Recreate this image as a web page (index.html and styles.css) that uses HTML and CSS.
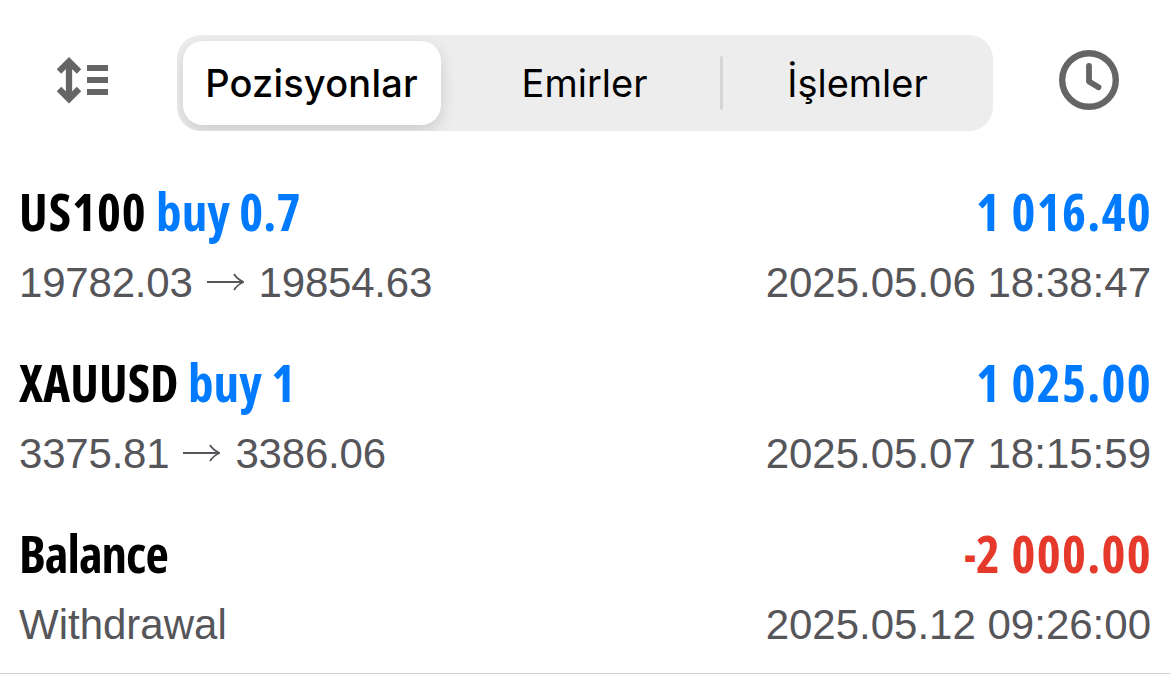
FILE: index.html
```html
<!DOCTYPE html>
<html lang="tr">
<head>
    <meta charset="UTF-8">
    <meta name="viewport" content="width=device-width, initial-scale=1.0">
    <title>Pozisyonlar</title>
    <link rel="stylesheet" href="styles.css">
</head>
<body>
    <header class="toolbar">
        <svg class="icon-sort" viewBox="0 0 54 48" width="54" height="48">
            <path d="M13 5V43M3 15.500L13 5.500L23 15.500M3 33L13 43L23 33" fill="none" stroke="#656565" stroke-width="6.300"/>
            <path d="M31 12H52M31 24H52M31 36H52" fill="none" stroke="#656565" stroke-width="6"/>
        </svg>
        <nav class="tabs">
            <div class="tab active">Pozisyonlar</div>
            <div class="tab">Emirler</div>
            <div class="divider"></div>
            <div class="tab">İşlemler</div>
        </nav>
        <svg class="icon-clock" viewBox="0 0 60 60" width="60" height="60">
            <circle cx="30" cy="30" r="26.800" fill="none" stroke="#656565" stroke-width="6.400"/>
            <path d="M30 16V31.500L39.500 37.200" fill="none" stroke="#656565" stroke-width="5.800" stroke-linecap="round" stroke-linejoin="round"/>
        </svg>
    </header>

    <main class="history">
        <div class="deal">
            <div class="line">
                <div class="title"><span class="symbol">US100</span> <span class="buy">buy 0.7</span></div>
                <div class="profit buy">1 016.40</div>
            </div>
            <div class="line details">
                <div class="prices">
                    <span>19782.03</span>
                    <svg class="arrow" viewBox="0 0 37 20" width="37" height="20"><path d="M0 10H36M27 2Q30 7 36.500 10Q30 13 27 18" fill="none" stroke="#55555a" stroke-width="1.800"/></svg>
                    <span>19854.63</span>
                </div>
                <div class="time">2025.05.06 18:38:47</div>
            </div>
        </div>
        <div class="deal">
            <div class="line">
                <div class="title">XAUUSD <span class="buy">buy 1</span></div>
                <div class="profit buy">1 025.00</div>
            </div>
            <div class="line details">
                <div class="prices">
                    <span>3375.81</span>
                    <svg class="arrow" viewBox="0 0 37 20" width="37" height="20"><path d="M0 10H36M27 2Q30 7 36.500 10Q30 13 27 18" fill="none" stroke="#55555a" stroke-width="1.800"/></svg>
                    <span>3386.06</span>
                </div>
                <div class="time">2025.05.07 18:15:59</div>
            </div>
        </div>
        <div class="deal">
            <div class="line">
                <div class="title balance">Balance</div>
                <div class="profit loss"><span class="minus">-</span>2 000.00</div>
            </div>
            <div class="line details">
                <div>Withdrawal</div>
                <div class="time">2025.05.12 09:26:00</div>
            </div>
        </div>
    </main>
</body>
</html>
```
FILE: styles.css
```css
* {
    box-sizing: border-box;
}
body {
    margin: 0;
    background-color: #fff;
}
.toolbar {
    display: flex;
    align-items: center;
    justify-content: space-between;
    height: 166px;
    padding: 0 51px 0 56px;
}
.icon-sort,
.icon-clock {
    display: block;
    margin-bottom: 6px;
}
.tabs {
    display: flex;
    align-items: center;
    width: 816px;
    height: 96px;
    padding: 6px 0 6px 6px;
    background-color: #ededed;
    border-radius: 24px;
    overflow: hidden;
}
.tab {
    flex: 1;
    display: flex;
    align-items: center;
    justify-content: center;
    height: 84px;
    font-family: Inter, sans-serif;
    font-size: 38px;
    font-weight: 430;
    color: #000;
}
.tab.active {
    flex: none;
    width: 258px;
    margin-right: 9px;
    background-color: #fff;
    border-radius: 20px;
    font-weight: 550;
    letter-spacing: 0.2px;
    box-shadow: 0 6px 16px rgba(0, 0, 0, 0.14);
}
.divider {
    width: 3px;
    height: 54px;
    border-radius: 2px;
    background-color: #d5d5d5;
}
.history {
    height: 508px;
    border-bottom: 1px solid #d0d0d2;
}
.deal {
    height: 171px;
    padding: 10px 19px 0;
}
.deal:last-child {
    height: 160px;
}
.line {
    display: flex;
    justify-content: space-between;
    white-space: nowrap;
}
.title,
.profit {
    font-family: "Open Sans", sans-serif;
    font-stretch: 75%;
    font-weight: 700;
    font-size: 51px;
    line-height: 70px;
}
.title {
    letter-spacing: 0.1px;
}
.symbol {
    letter-spacing: 1px;
}
.balance {
    letter-spacing: -1px;
}
.profit {
    letter-spacing: 1.3px;
    margin-right: -1px;
}
.minus {
    display: inline-block;
    margin-right: -1px;
    transform: scaleX(0.75);
    transform-origin: right;
}
.buy {
    color: #007aff;
}
.loss {
    color: #e5392b;
}
.details {
    margin-top: 2px;
    font-family: "Liberation Sans", Arial, sans-serif;
    font-size: 42px;
    line-height: 70px;
    color: #55555a;
}
.prices {
    display: flex;
    align-items: center;
    letter-spacing: -0.2px;
}
.arrow {
    margin: 0 15px 3px 14px;
}
```
